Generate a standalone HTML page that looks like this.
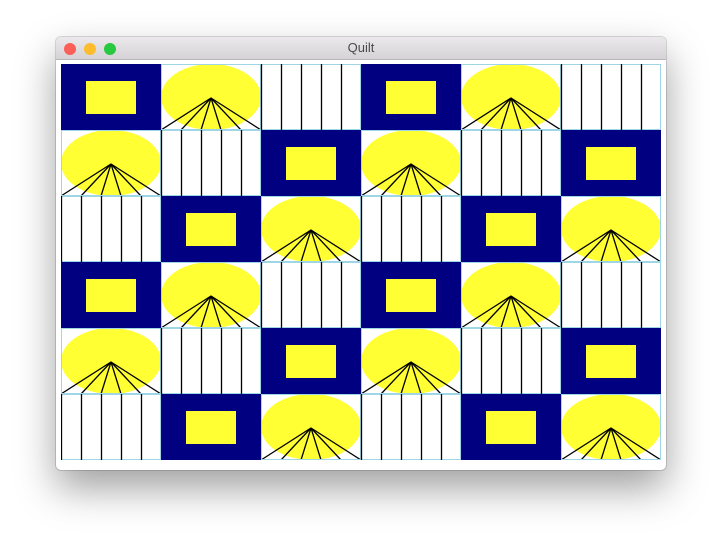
<!DOCTYPE html>
<html><head><meta charset="utf-8"><style>
html,body{margin:0;padding:0;background:#fff;width:722px;height:544px;overflow:hidden;font-family:"Liberation Sans",sans-serif}
.win{position:absolute;left:56px;top:37px;width:610px;height:433px;border-radius:5px;background:#fff;box-shadow:0 18px 40px rgba(0,0,0,.38),0 0 0 1px rgba(0,0,0,.14);overflow:hidden}
.tb{height:22px;background:linear-gradient(#ebe9eb,#d5d3d5);border-bottom:1px solid #b9b7b9;text-align:center;font-size:13px;line-height:22px;color:#4a4a4a}
.d{position:absolute;top:6px;width:12px;height:12px;border-radius:50%}
svg{position:absolute;left:5px;top:27px}
</style></head><body>
<div class="win">
<div class="tb">Quilt</div>
<div class="d" style="left:8px;background:#fc5f57;border:0"></div>
<div class="d" style="left:28px;background:#fdbc2e"></div>
<div class="d" style="left:48px;background:#28c840"></div>
<svg width="600" height="396" viewBox="0 0 600 396">
<defs>
<g id="N"><rect width="100" height="66" fill="#000080"/><rect x="25" y="17" width="50" height="33" fill="#ffff33"/></g>
<g id="E"><rect width="100" height="66" fill="#fff"/><ellipse cx="50" cy="33" rx="50" ry="33" fill="#ffff33"/>
<g stroke="#000" stroke-width="1.3"><line x1="50" y1="34" x2="0" y2="66"/><line x1="50" y1="34" x2="20" y2="66"/><line x1="50" y1="34" x2="40" y2="66"/><line x1="50" y1="34" x2="60" y2="66"/><line x1="50" y1="34" x2="80" y2="66"/><line x1="50" y1="34" x2="100" y2="66"/></g>
<rect x="0.5" y="0.5" width="99" height="65" fill="none" stroke="#9fd6e6"/></g>
<g id="S"><rect width="100" height="66" fill="#fff"/><rect x="0.5" y="0.5" width="99" height="65" fill="none" stroke="#9fd6e6"/>
<g stroke="#000" stroke-width="1.3"><line x1="0.5" y1="0" x2="0.5" y2="66"/><line x1="20.5" y1="0" x2="20.5" y2="66"/><line x1="40.5" y1="0" x2="40.5" y2="66"/><line x1="60.5" y1="0" x2="60.5" y2="66"/><line x1="80.5" y1="0" x2="80.5" y2="66"/></g></g>
</defs>
<use href="#N" x="0" y="0"/><use href="#E" x="100" y="0"/><use href="#S" x="200" y="0"/><use href="#N" x="300" y="0"/><use href="#E" x="400" y="0"/><use href="#S" x="500" y="0"/>
<use href="#E" x="0" y="66"/><use href="#S" x="100" y="66"/><use href="#N" x="200" y="66"/><use href="#E" x="300" y="66"/><use href="#S" x="400" y="66"/><use href="#N" x="500" y="66"/>
<use href="#S" x="0" y="132"/><use href="#N" x="100" y="132"/><use href="#E" x="200" y="132"/><use href="#S" x="300" y="132"/><use href="#N" x="400" y="132"/><use href="#E" x="500" y="132"/>
<use href="#N" x="0" y="198"/><use href="#E" x="100" y="198"/><use href="#S" x="200" y="198"/><use href="#N" x="300" y="198"/><use href="#E" x="400" y="198"/><use href="#S" x="500" y="198"/>
<use href="#E" x="0" y="264"/><use href="#S" x="100" y="264"/><use href="#N" x="200" y="264"/><use href="#E" x="300" y="264"/><use href="#S" x="400" y="264"/><use href="#N" x="500" y="264"/>
<use href="#S" x="0" y="330"/><use href="#N" x="100" y="330"/><use href="#E" x="200" y="330"/><use href="#S" x="300" y="330"/><use href="#N" x="400" y="330"/><use href="#E" x="500" y="330"/>
</svg>
</div>
</body></html>
